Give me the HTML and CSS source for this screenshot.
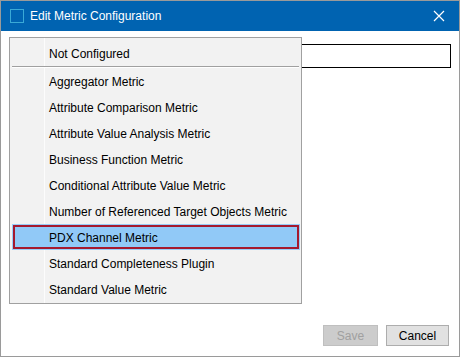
FILE: index.html
```html
<!DOCTYPE html>
<html lang="en">
<head>
    <meta charset="UTF-8" />
    <title>Edit Metric Configuration</title>
    <link rel="stylesheet" href="styles.css">
</head>
<body>
<div class="window">
    <div class="titlebar">
        <span class="app-icon"></span>
        <span class="title">Edit Metric Configuration</span>
        <svg class="close" width="12" height="12" viewBox="0 0 12 12">
            <path d="M1 1 L11 11 M11 1 L1 11" stroke="#fff" stroke-width="1.2" fill="none" />
        </svg>
    </div>
    <div class="content">
        <div class="field-row">
            <input type="text" class="field" />
        </div>
        <div class="button-group">
            <button type="button" class="btn" disabled>Save</button>
            <button type="button" class="btn">Cancel</button>
        </div>

        <!-- Liste déroulante ouverte -->
        <ul class="menu">
            <li class="item">Not Configured</li>
            <li class="separator"></li>
            <li class="item">Aggregator Metric</li>
            <li class="item">Attribute Comparison Metric</li>
            <li class="item">Attribute Value Analysis Metric</li>
            <li class="item">Business Function Metric</li>
            <li class="item">Conditional Attribute Value Metric</li>
            <li class="item">Number of Referenced Target Objects Metric</li>
            <li class="item selected">PDX Channel Metric</li>
            <li class="item">Standard Completeness Plugin</li>
            <li class="item">Standard Value Metric</li>
        </ul>
    </div>
</div>
</body>
</html>
```

FILE: styles.css
```css
/* Base */
* {
    box-sizing: border-box;
}
body {
    margin: 0;
    font-family: 'Segoe UI', 'Liberation Sans', Arial, sans-serif;
    font-size: 12px;
    color: #000;
    background: #fff;
}
.window {
    width: 460px;
    height: 357px;
    border: 1px solid #9a9a9a;
    display: flex;
    flex-direction: column;
    background: #fff;
}
.titlebar {
    height: 30px;
    background: #0063b1;
    color: #fff;
    display: flex;
    align-items: center;
    padding: 0 0 0 9px;
    flex-shrink: 0;
}
.app-icon {
    width: 14px;
    height: 14px;
    border: 1px solid #3aa9d6;
    margin-right: 6px;
}
.title {
    font-size: 12px;
    flex: 1;
}
.close {
    margin-right: 14px;
}
.content {
    position: relative;
    flex: 1;
    display: flex;
    flex-direction: column;
    padding: 13px 8px 10px 8px;
}
.field-row {
    display: flex;
    justify-content: flex-end;
}
.field {
    width: 350px;
    height: 24px;
    border: 1px solid #000;
    outline: none;
    padding: 0 4px;
    font: inherit;
}
.button-group {
    margin-top: auto;
    display: flex;
    justify-content: flex-end;
    gap: 8px;
    padding-right: 2px;
}
.btn {
    height: 21px;
    font: inherit;
    border: 1px solid #adadad;
    background: #e1e1e1;
    color: #000;
    padding: 0;
    width: 63px;
}
.btn:disabled {
    width: 55px;
    background: #cccccc;
    border-color: #bfbfbf;
    color: #a0a0a0;
}
/* Liste ouverte */
.menu {
    position: absolute;
    left: 8px;
    top: 6px;
    width: 293px;
    margin: 0;
    padding: 2px 0 1px 0;
    list-style: none;
    background: #f2f2f2;
    border: 1px solid #a0a0a0;
    background-image: linear-gradient(to right, transparent 34px, #fcfcfc 34px, #fcfcfc 35px, transparent 35px);
}
.item {
    height: 26px;
    line-height: 28px;
    padding-left: 39px;
    white-space: nowrap;
}
.separator {
    height: 2px;
    margin: 0 2px;
    border-top: 1px solid #a0a0a0;
    background: linear-gradient(#fff, #fff) 0 0 / 100% 1px no-repeat;
}
.item.selected {
    margin: 0 1px 0 2px;
    padding-left: 37px;
    background: #91c9f7;
    box-shadow: inset 0 0 0 1px #99cdf7, inset 0 0 0 3px #a5192e;
}
```
